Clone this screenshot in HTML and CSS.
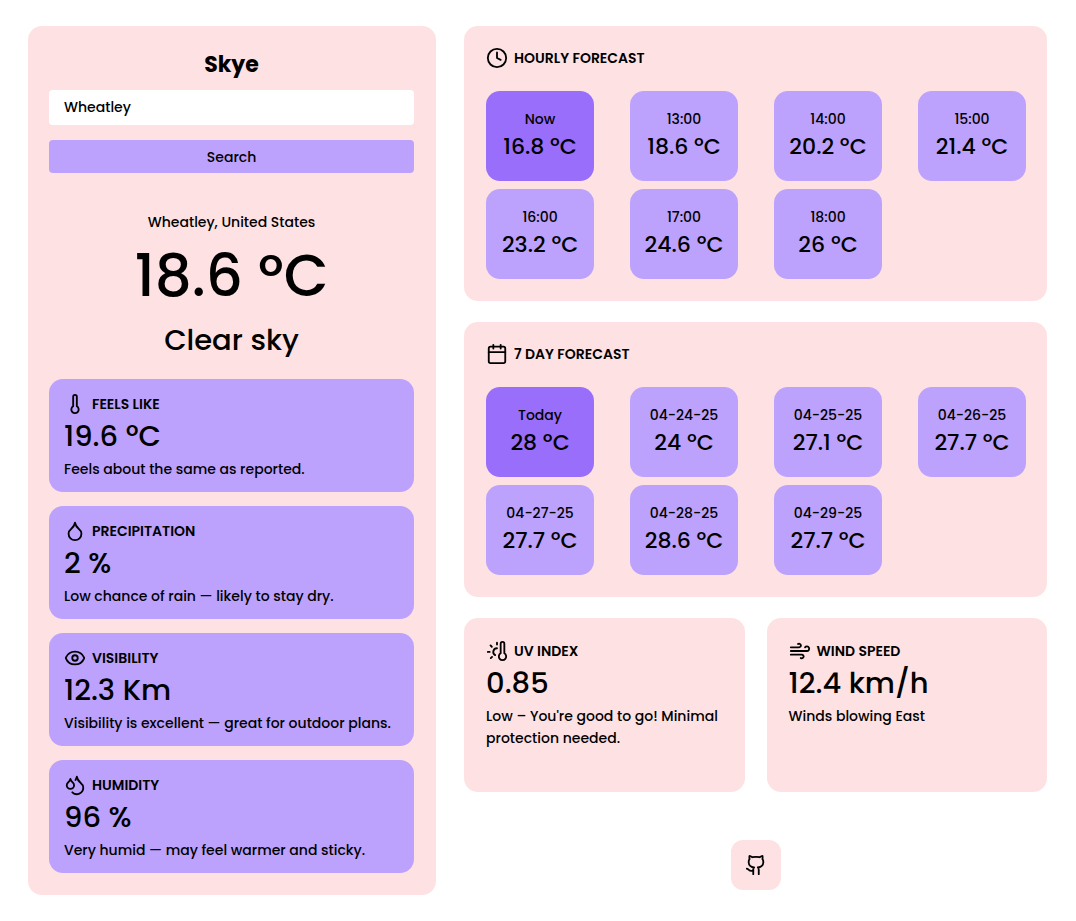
FILE: index.html
```html
<!DOCTYPE html>
<html lang="en">
<head>
<meta charset="utf-8">
<meta name="viewport" content="width=device-width, initial-scale=1">
<title>Skye</title>
<link rel="stylesheet" href="styles.css">
</head>
<body>
<main class="layout">
  <section class="panel current">
    <h1 class="brand">Skye</h1>
    <form class="search">
      <input class="search-input" type="text" aria-label="City" value="Wheatley">
      <button class="search-button" type="button">Search</button>
    </form>
    <p class="place">Wheatley, United States</p>
    <p class="temperature">18.6 ºC</p>
    <p class="condition">Clear sky</p>
    <div class="metrics">
      <article class="metric">
        <h2 class="heading"><svg class="icon" viewBox="0 0 24 24"><path d="M14 4v10.54a4 4 0 1 1-4 0V4a2 2 0 0 1 4 0Z"/></svg>FEELS LIKE</h2>
        <p class="value">19.6 ºC</p>
        <p class="note">Feels about the same as reported.</p>
      </article>
      <article class="metric">
        <h2 class="heading"><svg class="icon" viewBox="0 0 24 24"><path d="M12 22a7 7 0 0 0 7-7c0-2-1-3.900-3-5.500s-3.500-4-4-6.500c-.5 2.500-2 4.900-4 6.500C6 11.100 5 13 5 15a7 7 0 0 0 7 7z"/></svg>PRECIPITATION</h2>
        <p class="value">2 %</p>
        <p class="note">Low chance of rain — likely to stay dry.</p>
      </article>
      <article class="metric">
        <h2 class="heading"><svg class="icon" viewBox="0 0 24 24"><path d="M2.062 12.348a1 1 0 0 1 0-.696 10.750 10.750 0 0 1 19.876 0 1 1 0 0 1 0 .696 10.750 10.750 0 0 1-19.876 0"/><circle cx="12" cy="12" r="3"/></svg>VISIBILITY</h2>
        <p class="value">12.3 Km</p>
        <p class="note">Visibility is excellent — great for outdoor plans.</p>
      </article>
      <article class="metric">
        <h2 class="heading"><svg class="icon" viewBox="0 0 24 24"><path d="M7 16.300c2.200 0 4-1.830 4-4.050 0-1.160-.57-2.260-1.710-3.190S7.290 6.750 7 5.300c-.29 1.450-1.140 2.840-2.290 3.760S3 11.100 3 12.250c0 2.220 1.800 4.050 4 4.050z"/><path d="M12.560 6.600A10.970 10.970 0 0 0 14 3.020c.5 2.500 2 4.900 4 6.500s3 3.500 3 5.500a6.980 6.980 0 0 1-11.910 4.970"/></svg>HUMIDITY</h2>
        <p class="value">96 %</p>
        <p class="note">Very humid — may feel warmer and sticky.</p>
      </article>
    </div>
  </section>

  <div class="side">
    <section class="panel forecast">
      <h2 class="heading"><svg class="icon" viewBox="0 0 24 24"><circle cx="12" cy="12" r="10"/><path d="M12 6v6l4 2"/></svg>HOURLY FORECAST</h2>
      <ul class="tiles">
        <li class="tile active"><span>Now</span><span class="tile-value">16.8 ºC</span></li>
        <li class="tile"><span>13:00</span><span class="tile-value">18.6 ºC</span></li>
        <li class="tile"><span>14:00</span><span class="tile-value">20.2 ºC</span></li>
        <li class="tile"><span>15:00</span><span class="tile-value">21.4 ºC</span></li>
        <li class="tile"><span>16:00</span><span class="tile-value">23.2 ºC</span></li>
        <li class="tile"><span>17:00</span><span class="tile-value">24.6 ºC</span></li>
        <li class="tile"><span>18:00</span><span class="tile-value">26 ºC</span></li>
      </ul>
    </section>

    <section class="panel forecast">
      <h2 class="heading"><svg class="icon" viewBox="0 0 24 24"><path d="M8 2v4M16 2v4M3 10h18"/><rect x="3" y="4" width="18" height="18" rx="2"/></svg>7 DAY FORECAST</h2>
      <ul class="tiles">
        <li class="tile active"><span>Today</span><span class="tile-value">28 ºC</span></li>
        <li class="tile"><span>04-24-25</span><span class="tile-value">24 ºC</span></li>
        <li class="tile"><span>04-25-25</span><span class="tile-value">27.1 ºC</span></li>
        <li class="tile"><span>04-26-25</span><span class="tile-value">27.7 ºC</span></li>
        <li class="tile"><span>04-27-25</span><span class="tile-value">27.7 ºC</span></li>
        <li class="tile"><span>04-28-25</span><span class="tile-value">28.6 ºC</span></li>
        <li class="tile"><span>04-29-25</span><span class="tile-value">27.7 ºC</span></li>
      </ul>
    </section>

    <div class="extras">
      <section class="panel extra">
        <h2 class="heading"><svg class="icon" viewBox="0 0 24 24"><path d="M12 9a4 4 0 0 0-2 7.500M12 3v2M6.600 18.400l-1.400 1.400M20 4v10.540a4 4 0 1 1-4 0V4a2 2 0 0 1 4 0ZM4 13H2M6.340 7.340 4.930 5.930"/></svg>UV INDEX</h2>
        <p class="value">0.85</p>
        <p class="note">Low – You're good to go! Minimal protection needed.</p>
      </section>
      <section class="panel extra">
        <h2 class="heading"><svg class="icon" viewBox="0 0 24 24"><path d="M12.800 19.600A2 2 0 1 0 14 16H2M17.500 8a2.500 2.500 0 1 1 2 4H2M9.800 4.400A2 2 0 1 1 11 8H2"/></svg>WIND SPEED</h2>
        <p class="value">12.4 km/h</p>
        <p class="note">Winds blowing East</p>
      </section>
    </div>

    <a class="github" href="#" aria-label="GitHub"><svg class="icon" viewBox="0 0 24 24"><path d="M15 22v-4a4.800 4.800 0 0 0-1-3.500c3 0 6-2 6-5.500.08-1.250-.27-2.480-1-3.500.28-1.150.28-2.350 0-3.500 0 0-1 0-3 1.500-2.640-.5-5.360-.5-8 0C6 2 5 2 5 2c-.3 1.150-.3 2.350 0 3.500A5.403 5.403 0 0 0 4 9c0 3.500 3 5.500 6 5.500-.39.490-.68 1.050-.85 1.650-.17.600-.22 1.230-.15 1.850v4"/><path d="M9 18c-4.510 2-5-2-7-2"/></svg></a>
  </div>
</main>
</body>
</html>
```
FILE: styles.css
```css
* {
  box-sizing: border-box;
  margin: 0;
  padding: 0;
}

body {
  background: #fff;
  color: #000;
  font: 500 14px/22px Poppins, Inter, sans-serif;
}

.layout {
  display: grid;
  grid-template-columns: minmax(0, 7fr) minmax(0, 10fr);
  align-items: start;
  gap: 28px;
  padding: 26px 29px 26px 28px;
}

.panel {
  background: #fee2e3;
  border-radius: 14px;
}

.current {
  padding: 22px 22px 22px 21px;
  text-align: center;
}

.brand {
  margin-bottom: 8px;
  font-size: 22px;
  font-weight: 700;
  line-height: 34px;
}

.search {
  display: grid;
  gap: 15px;
  margin-bottom: 38px;
}

.search-input,
.search-button {
  width: 100%;
  border: 0;
  border-radius: 4px;
  color: inherit;
  font: inherit;
}

.search-input {
  height: 35px;
  padding: 0 15px;
  background: #fff;
}

.search-button {
  height: 33px;
  background: #bca2fd;
  cursor: pointer;
}

.temperature {
  font-size: 58px;
  line-height: 86px;
}

.condition {
  margin-bottom: 17px;
  font-size: 29px;
  line-height: 43px;
}

.metrics {
  display: grid;
  gap: 14px;
  text-align: left;
}

.metric {
  padding: 14px 15px 12px;
  border-radius: 14px;
  background: #bca2fd;
}

.heading {
  display: flex;
  align-items: center;
  gap: 6px;
  font-size: 14px;
  font-weight: 600;
  line-height: 22px;
}

.icon {
  flex: none;
  width: 22px;
  height: 22px;
  fill: none;
  stroke: currentColor;
  stroke-width: 2;
  stroke-linecap: round;
  stroke-linejoin: round;
}

.value {
  font-size: 29px;
  line-height: 43px;
}

.side {
  display: flex;
  flex-direction: column;
  gap: 21px;
}

.forecast {
  padding: 21px 21px 22px 22px;
}

.tiles {
  display: grid;
  grid-template-columns: repeat(4, 1fr);
  gap: 8px 36px;
  margin-top: 22px;
  list-style: none;
}

.tile {
  display: flex;
  flex-direction: column;
  align-items: center;
  padding: 17px 0 18px;
  border-radius: 14px;
  background: #bca2fd;
  white-space: nowrap;
}

.tile.active {
  background: #996efb;
}

.tile-value {
  font-size: 22px;
  line-height: 33px;
}

.extras {
  display: grid;
  grid-template-columns: 1fr 1fr;
  gap: 22px;
}

.extra {
  min-height: 174px;
  padding: 22px 21px 22px 22px;
}

.github {
  display: grid;
  place-items: center;
  align-self: center;
  width: 50px;
  height: 50px;
  margin-top: 27px;
  border-radius: 12px;
  background: #fee2e3;
  color: inherit;
}
```
